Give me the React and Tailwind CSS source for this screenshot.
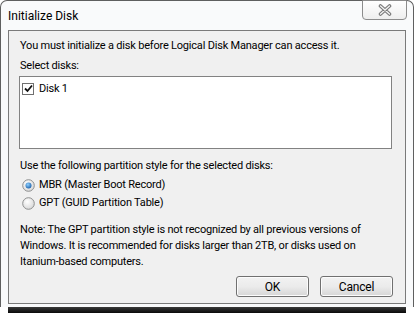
import React from "react";

function CloseGlyph() {
  return (
    <svg width="14" height="12" viewBox="0 0 14 12">
      <path d="M2.5 2 L11.5 10 M11.5 2 L2.5 10" stroke="#777" strokeWidth="3.6" strokeLinecap="round" />
      <path d="M2.5 2 L11.5 10 M11.5 2 L2.5 10" stroke="#f4f4f4" strokeWidth="1.4" strokeLinecap="round" />
    </svg>
  );
}

function Radio({ checked }) {
  return (
    <svg width="13" height="13" viewBox="0 0 13 13">
      <defs>
        <radialGradient id={checked ? "rg1" : "rg0"} cx="0.4" cy="0.35" r="0.7">
          <stop offset="0" stopColor="#ffffff" />
          <stop offset="1" stopColor="#d6d6d6" />
        </radialGradient>
        <radialGradient id="dot" cx="0.4" cy="0.35" r="0.7">
          <stop offset="0" stopColor="#8ed0ff" />
          <stop offset="1" stopColor="#1a5ea8" />
        </radialGradient>
      </defs>
      <circle cx="6.5" cy="6.5" r="5.8" fill={`url(#${checked ? "rg1" : "rg0"})`} stroke="#8e8f8f" strokeWidth="1" />
      {checked && <circle cx="6.5" cy="6.5" r="3" fill="url(#dot)" />}
    </svg>
  );
}

function Check() {
  return (
    <span className="w-[12px] h-[12px] border border-[#707070] bg-white flex items-center justify-center">
      <svg width="9" height="9" viewBox="0 0 9 9">
        <path d="M1 4.5 L3.5 7 L8 1.5" stroke="#111" strokeWidth="1.8" fill="none" />
      </svg>
    </span>
  );
}

function Btn({ children }) {
  return (
    <div className="w-[73px] h-[21px] rounded-[3px] border border-[#707070] bg-gradient-to-b from-[#f2f2f2] via-[#ebebeb] to-[#d6d6d6] flex items-center justify-center text-[12px] text-black shadow-[inset_0_0_0_1px_#fcfcfc]">
      {children}
    </div>
  );
}

export default function App() {
  return (
    <div
      className="w-[414px] h-[313px] bg-white relative overflow-hidden text-[11px] tracking-[-0.2px] text-black"
      style={{ fontFamily: 'Roboto, "Liberation Sans", sans-serif' }}
    >
      <div className="h-[307px] border-l border-t border-r border-[#5f5f5f] rounded-t-[7px] bg-[#f9fafb] flex flex-col relative">
        <div className="h-[29px] pl-[7px] flex items-center text-[12px] tracking-normal pt-[1px]">Initialize Disk</div>
        <div className="absolute top-[-1px] right-[6px] w-[45px] h-[20px] border border-[#8c8c8c] rounded-b-[4px] bg-gradient-to-b from-[#ffffff] to-[#eeeeee] flex items-center justify-center">
          <CloseGlyph />
        </div>
        <div className="mx-[7px] h-[274px] border border-[#7a7a7a] bg-[#f0f0f0] flex flex-col pt-[7px] px-[11px]">
          <div className="h-[15px] leading-[15px] whitespace-nowrap">You must initialize a disk before Logical Disk Manager can access it.</div>
          <div className="h-[15px] leading-[15px] mt-[5px]">Select disks:</div>
          <div className="mt-[3px] ml-[-1px] w-[373px] h-[73px] border border-[#828282] bg-white pt-[4px] pl-[2px]">
            <div className="flex items-center gap-[5px] h-[15px]">
              <Check />
              <span className="leading-[15px]">Disk 1</span>
            </div>
          </div>
          <div className="h-[15px] leading-[15px] mt-[9px] whitespace-nowrap">Use the following partition style for the selected disks:</div>
          <div className="flex flex-col mt-[3px] ml-[2px]">
            <div className="h-[18px] flex items-center gap-[4px]">
              <Radio checked />
              <span>MBR (Master Boot Record)</span>
            </div>
            <div className="h-[18px] flex items-center gap-[4px]">
              <Radio />
              <span>GPT (GUID Partition Table)</span>
            </div>
          </div>
          <div className="mt-[10px] leading-[16px] whitespace-nowrap">
            Note: The GPT partition style is not recognized by all previous versions of
            <br />
            Windows. It is recommended for disks larger than 2TB, or disks used on
            <br />
            Itanium-based computers.
          </div>
          <div className="flex justify-end gap-[11px] mt-[6px] mr-[1px]">
            <Btn>OK</Btn>
            <Btn>Cancel</Btn>
          </div>
        </div>
      </div>
      <div className="h-[6px] mx-[8px] bg-gradient-to-b from-[#3a3a3a] to-[#0a0a0a]" />
    </div>
  );
}
